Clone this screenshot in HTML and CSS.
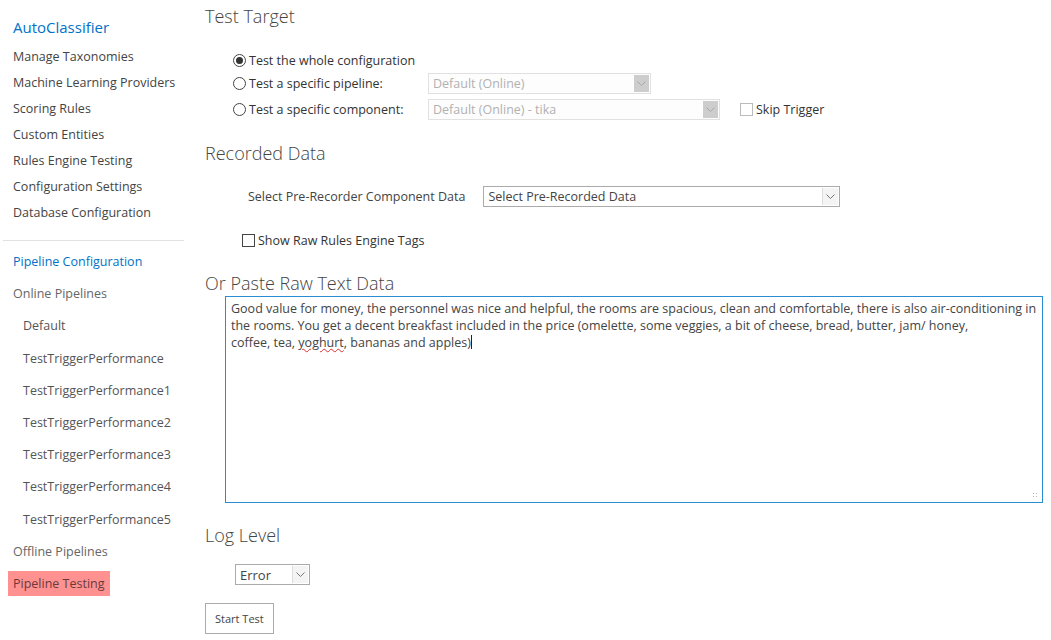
FILE: index.html
```html
<!DOCTYPE html>
<html lang="en">
<head>
    <meta charset="UTF-8">
    <title>Pipeline Testing</title>
    <link rel="stylesheet" href="styles.css">
</head>
<body>
    <div id="page">
        <div id="side-nav">
            <a class="nav-title" href="#">AutoClassifier</a>
            <a class="nav-link" href="#">Manage Taxonomies</a>
            <a class="nav-link" href="#">Machine Learning Providers</a>
            <a class="nav-link" href="#">Scoring Rules</a>
            <a class="nav-link" href="#">Custom Entities</a>
            <a class="nav-link" href="#">Rules Engine Testing</a>
            <a class="nav-link" href="#">Configuration Settings</a>
            <a class="nav-link" href="#">Database Configuration</a>
            <div class="nav-sep"></div>
            <a class="nav-group blue" href="#">Pipeline Configuration</a>
            <a class="nav-group" href="#">Online Pipelines</a>
            <a class="nav-group sub" href="#">Default</a>
            <a class="nav-group sub" href="#">TestTriggerPerformance</a>
            <a class="nav-group sub" href="#">TestTriggerPerformance1</a>
            <a class="nav-group sub" href="#">TestTriggerPerformance2</a>
            <a class="nav-group sub" href="#">TestTriggerPerformance3</a>
            <a class="nav-group sub" href="#">TestTriggerPerformance4</a>
            <a class="nav-group sub" href="#">TestTriggerPerformance5</a>
            <a class="nav-group" href="#">Offline Pipelines</a>
            <a class="nav-group active" href="#">Pipeline Testing</a>
        </div>

        <div id="content">
            <h2>Test Target</h2>
            <div class="target-options">
                <div class="option-row">
                    <label class="radio-label"><span class="radio checked"></span>Test the whole configuration</label>
                </div>
                <div class="option-row">
                    <label class="radio-label fixed"><span class="radio"></span>Test a specific pipeline:</label>
                    <div class="select disabled pipeline-select">
                        <span class="select-text">Default (Online)</span>
                        <span class="select-arrow"><svg width="9" height="6" viewBox="0 0 9 6"><path d="M0.5 0.5 L4.5 4.5 L8.5 0.5" fill="none" stroke="#a8a8a8" stroke-width="1"/></svg></span>
                    </div>
                </div>
                <div class="option-row">
                    <label class="radio-label fixed"><span class="radio"></span>Test a specific component:</label>
                    <div class="select disabled component-select">
                        <span class="select-text">Default (Online) - tika</span>
                        <span class="select-arrow"><svg width="9" height="6" viewBox="0 0 9 6"><path d="M0.5 0.5 L4.5 4.5 L8.5 0.5" fill="none" stroke="#a8a8a8" stroke-width="1"/></svg></span>
                    </div>
                    <label class="check-label skip"><span class="checkbox light"></span>Skip Trigger</label>
                </div>
            </div>

            <h2>Recorded Data</h2>
            <div class="recorded-row">
                <span class="field-label">Select Pre-Recorder Component Data</span>
                <div class="select recorded-select">
                    <span class="select-text">Select Pre-Recorded Data</span>
                    <span class="select-arrow"><svg width="9" height="6" viewBox="0 0 9 6"><path d="M0.5 0.5 L4.5 4.5 L8.5 0.5" fill="none" stroke="#777" stroke-width="1"/></svg></span>
                </div>
            </div>
            <div class="tags-row">
                <label class="check-label"><span class="checkbox"></span>Show Raw Rules Engine Tags</label>
            </div>

            <h2 class="paste-title">Or Paste Raw Text Data</h2>
            <div class="raw-text">
                <p>Good value for money, the personnel was nice and helpful, the rooms are spacious, clean and comfortable, there is also air-conditioning in the rooms. You get a decent breakfast included in the price (omelette, some veggies, a bit of cheese, bread, butter, jam/ honey,<br>coffee, tea, <span class="misspelled">yoghurt</span>, bananas and apples)<span class="caret"></span></p>
                <span class="grip"></span>
            </div>

            <h2 class="log-title">Log Level</h2>
            <div class="log-row">
                <div class="select log-select">
                    <span class="select-text">Error</span>
                    <span class="select-arrow"><svg width="9" height="6" viewBox="0 0 9 6"><path d="M0.5 0.5 L4.5 4.5 L8.5 0.5" fill="none" stroke="#777" stroke-width="1"/></svg></span>
                </div>
            </div>
            <button class="start-btn">Start Test</button>
        </div>
    </div>
</body>
</html>
```

FILE: styles.css
```css
body {
    margin: 0;
    font-family: "Open Sans", "Noto Sans", sans-serif;
    font-size: 12.5px;
    color: #444;
    background-color: #fff;
}
a {
    text-decoration: none;
}
#page {
    display: flex;
}
#side-nav {
    width: 185px;
    padding-top: 16px;
    display: flex;
    flex-direction: column;
    align-items: flex-start;
}
.nav-title {
    font-size: 15px;
    color: #0072c6;
    margin-left: 13px;
    line-height: 22px;
    margin-bottom: 6px;
}
.nav-link {
    color: #444;
    margin-left: 13px;
    line-height: 26px;
}
.nav-sep {
    width: 181px;
    margin-left: 3px;
    border-top: 1px solid #e1e1e1;
    margin-top: 14px;
    margin-bottom: 8px;
}
.nav-group {
    color: #666;
    line-height: 25px;
    padding: 0 5px;
    margin: 0 0 7.2px 8px;
}
.nav-group.blue {
    color: #0072c6;
}
.nav-group.sub {
    margin-left: 18px;
    color: #555;
}
.nav-group.active {
    background-color: #ff9191;
    color: #6a3a3a;
}
#content {
    flex: 1;
    padding-left: 20px;
}
h2 {
    font-family: "Open Sans", sans-serif;
    font-weight: 300;
    font-size: 18px;
    color: #444;
    margin: 5px 0 0 0;
    line-height: 22px;
}
.target-options {
    margin-top: 22px;
    padding-left: 28px;
    margin-bottom: 19px;
}
.option-row {
    display: flex;
    align-items: center;
    height: 25px;
}
.option-row:first-child {
    height: 22px;
}
.option-row:last-child {
    height: 27px;
}
.radio-label {
    display: flex;
    align-items: center;
    color: #333;
}
.radio-label.fixed {
    width: 195px;
}
.radio {
    width: 11px;
    height: 11px;
    border: 1px solid #444;
    border-radius: 50%;
    margin-right: 3px;
    position: relative;
}
.radio.checked::after {
    content: "";
    position: absolute;
    left: 2px;
    top: 2px;
    width: 7px;
    height: 7px;
    border-radius: 50%;
    background-color: #333;
}
.select {
    display: flex;
    align-items: center;
    height: 19px;
    border: 1px solid #ababab;
    background-color: #fff;
    color: #444;
}
.select-text {
    flex: 1;
    padding-left: 4px;
}
.select-arrow {
    width: 15px;
    height: 17px;
    margin-right: 1px;
    display: flex;
    align-items: center;
    justify-content: center;
    background-color: #f4f4f4;
    border-left: 1px solid #ddd;
}
.select.disabled {
    border-color: #e1e1e1;
    color: #b1b1b1;
    background-color: #fdfdfd;
}
.select.disabled .select-arrow {
    background-color: #cdcdcd;
    border-left: 1px solid #fff;
}
.pipeline-select {
    width: 221px;
}
.component-select {
    width: 290px;
}
.check-label {
    display: flex;
    align-items: center;
    color: #333;
}
.checkbox {
    width: 11px;
    height: 11px;
    border: 1px solid #444;
    margin-right: 3px;
    background-color: #fff;
}
.checkbox.light {
    border-color: #bbb;
}
.skip {
    margin-left: 20px;
}
.recorded-row {
    display: flex;
    align-items: center;
    margin-top: 22px;
    padding-left: 43px;
}
.field-label {
    color: #444;
    margin-right: 18px;
}
.recorded-select {
    width: 355px;
}
.tags-row {
    margin-top: 25px;
    padding-left: 37px;
}
.paste-title {
    margin-top: 23px;
}
.raw-text {
    position: relative;
    margin: 2px 0 0 20px;
    width: 816px;
    height: 205px;
    border: 1px solid #2a8dd4;
}
.raw-text p {
    margin: 3px 5px;
    line-height: 17px;
    color: #444;
}
.misspelled {
    text-decoration: underline wavy #e03030;
    text-decoration-thickness: 1px;
}
.caret {
    display: inline-block;
    width: 1px;
    height: 14px;
    background-color: #222;
    vertical-align: -2px;
}
.grip {
    position: absolute;
    right: 3px;
    bottom: 3px;
    width: 7px;
    height: 7px;
    background-image: radial-gradient(circle, #b5b5b5 1px, transparent 1px);
    background-size: 3px 3px;
}
.log-title {
    margin-top: 21px;
}
.log-row {
    margin-top: 18px;
    padding-left: 30px;
}
.log-select {
    width: 73px;
    font-size: 13px;
}
.start-btn {
    margin-top: 18px;
    height: 31px;
    padding: 0 9px;
    background-color: #fff;
    border: 1px solid #ababab;
    font-family: "Open Sans", sans-serif;
    font-size: 11px;
    color: #444;
}
```
